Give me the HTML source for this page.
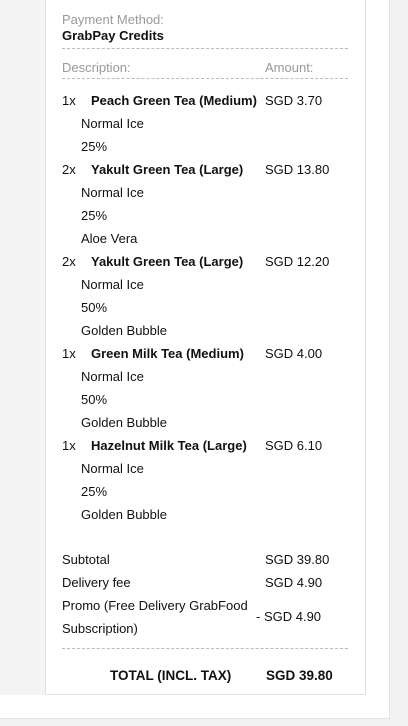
<!DOCTYPE html>
<html><head><meta charset="utf-8"><style>
*{margin:0;padding:0;box-sizing:border-box}
body{width:408px;height:726px;background:#f1f1f1;font-family:"Liberation Sans",Arial,sans-serif;font-size:13px;color:#111;position:relative;overflow:hidden}
.outer{position:absolute;left:0;top:-2px;width:390px;height:721px;background:#fff;border-right:1px solid #e2e2e2;border-bottom:1px solid #e2e2e2}
.gray{position:absolute;left:0;top:-2px;width:365px;height:697px;background:#f4f4f4}
.card{position:absolute;left:45px;top:-2px;width:321px;height:697px;background:#fff;border:1px solid #e0e0e0;border-top:none}
.t{position:absolute;line-height:16px;white-space:nowrap;margin-top:1px}
.g{color:#999}
.b{font-weight:bold}
.d{position:absolute;left:62px;width:286px;height:0;border-top:1px dashed #bbb}
</style></head><body>
<div class="outer"></div><div class="gray"></div><div class="card"></div>
<div class="t g" style="left:62px;top:11px">Payment Method:</div>
<div class="t b" style="left:62px;top:27px">GrabPay Credits</div>
<div class="d" style="top:48px"></div>
<div class="t g" style="left:62px;top:59px">Description:</div>
<div class="t g" style="left:265px;top:59px">Amount:</div>
<div class="d" style="top:78px"></div>

<div class="t" style="left:62px;top:92px">1x</div><div class="t b" style="left:91px;top:92px">Peach Green Tea (Medium)</div><div class="t" style="left:265px;top:92px">SGD 3.70</div>
<div class="t" style="left:81px;top:115px">Normal Ice</div>
<div class="t" style="left:81px;top:138px">25%</div>

<div class="t" style="left:62px;top:161px">2x</div><div class="t b" style="left:91px;top:161px">Yakult Green Tea (Large)</div><div class="t" style="left:265px;top:161px">SGD 13.80</div>
<div class="t" style="left:81px;top:184px">Normal Ice</div>
<div class="t" style="left:81px;top:207px">25%</div>
<div class="t" style="left:81px;top:230px">Aloe Vera</div>

<div class="t" style="left:62px;top:253px">2x</div><div class="t b" style="left:91px;top:253px">Yakult Green Tea (Large)</div><div class="t" style="left:265px;top:253px">SGD 12.20</div>
<div class="t" style="left:81px;top:276px">Normal Ice</div>
<div class="t" style="left:81px;top:299px">50%</div>
<div class="t" style="left:81px;top:322px">Golden Bubble</div>

<div class="t" style="left:62px;top:345px">1x</div><div class="t b" style="left:91px;top:345px">Green Milk Tea (Medium)</div><div class="t" style="left:265px;top:345px">SGD 4.00</div>
<div class="t" style="left:81px;top:368px">Normal Ice</div>
<div class="t" style="left:81px;top:391px">50%</div>
<div class="t" style="left:81px;top:414px">Golden Bubble</div>

<div class="t" style="left:62px;top:437px">1x</div><div class="t b" style="left:91px;top:437px">Hazelnut Milk Tea (Large)</div><div class="t" style="left:265px;top:437px">SGD 6.10</div>
<div class="t" style="left:81px;top:460px">Normal Ice</div>
<div class="t" style="left:81px;top:483px">25%</div>
<div class="t" style="left:81px;top:506px">Golden Bubble</div>

<div class="t" style="left:62px;top:551px">Subtotal</div><div class="t" style="left:265px;top:551px">SGD 39.80</div>
<div class="t" style="left:62px;top:574px">Delivery fee</div><div class="t" style="left:265px;top:574px">SGD 4.90</div>
<div class="t" style="left:62px;top:597px">Promo (Free Delivery GrabFood</div>
<div class="t" style="left:62px;top:620px">Subscription)</div>
<div class="t" style="left:256px;top:608px">- SGD 4.90</div>
<div class="d" style="top:648px"></div>
<div class="t b" style="left:110px;top:667px;font-size:13.5px">TOTAL (INCL. TAX)</div>
<div class="t b" style="left:266px;top:667px;font-size:13.5px">SGD 39.80</div>
</body></html>
